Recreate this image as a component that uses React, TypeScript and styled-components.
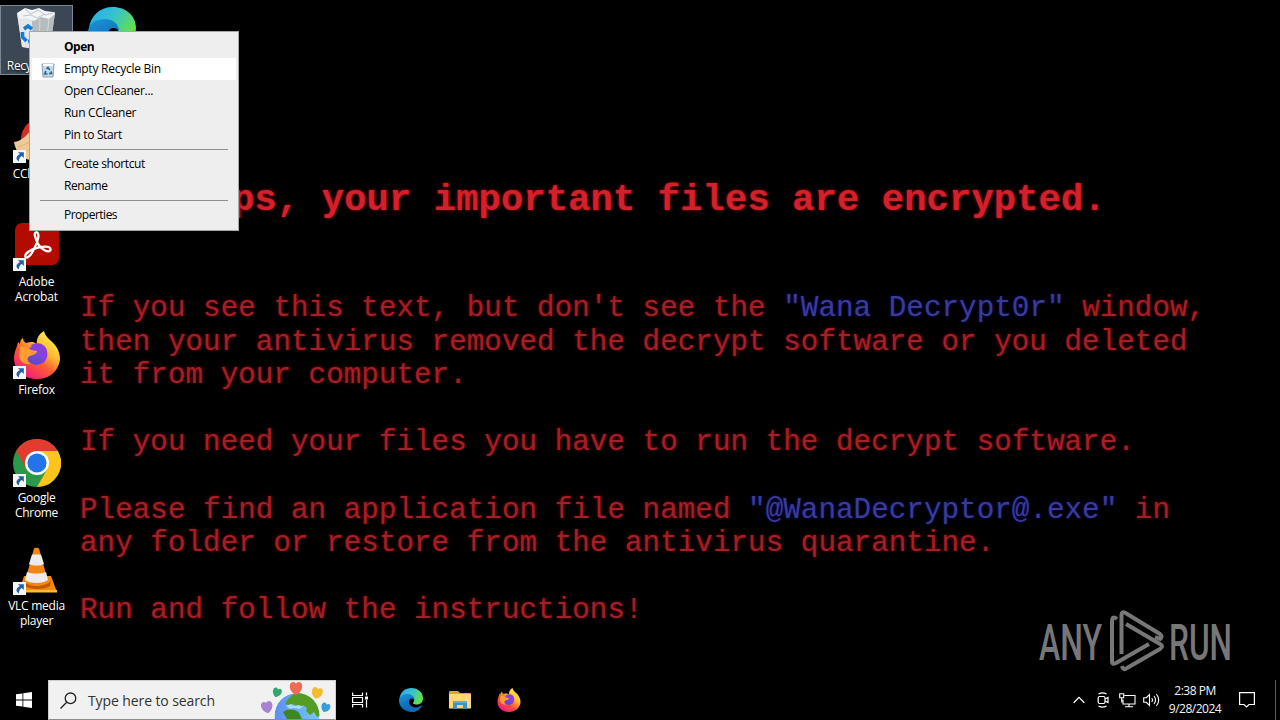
import React from "react";
import styled, { createGlobalStyle } from "styled-components";

const Global = createGlobalStyle`
  * { box-sizing: border-box; }
  body { margin: 0; background: #000; overflow: hidden; }
`;

const Screen = styled.div`
  position: relative;
  display: grid;
  grid-template-rows: 680px 40px;
  width: 1280px;
  height: 720px;
  overflow: hidden;
  background: #000;
  font-family: "Open Sans", "Noto Sans", sans-serif;
`;

const Desktop = styled.main`
  display: grid;
  grid-template: 680px / 1280px;
  overflow: hidden;
  > * { grid-area: 1 / 1; }
`;

/* wallpaper */
const Wallpaper = styled.section`
  padding: 177px 0 0 80px;
  font-family: "Liberation Mono", monospace;
  color: #a51f26;
  white-space: pre;
`;
const Headline = styled.h1`
  margin: 0 0 69px 85px;
  font-size: 37.33px;
  line-height: 46px;
  font-weight: 700;
  color: #d3202a;
  text-shadow: 0 0 3px #b00010;
`;
const Message = styled.div`
  margin: 0 0 33.6px;
  font-size: 29.3px;
  line-height: 33.6px;
  text-shadow: 0 0 3px #80000c;
`;
const Line = styled.div`
  display: flex;
  height: 33.6px;
`;
const Blue = styled.span`
  color: #3b3b98;
  text-shadow: 0 0 3px #10107c;
`;

/* desktop icons */
const IconColumn = styled.div`
  display: grid;
  grid-template-rows: repeat(6, 108px);
  align-content: start;
  width: 74px;
  padding-top: 5px;
`;
const Shortcut = styled.div<{ $selected?: boolean }>`
  display: flex;
  flex-direction: column;
  align-items: center;
  width: 73px;
  height: ${(p) => (p.$selected ? "70px" : "90px")};
  padding-top: 1px;
  border: 1px solid ${(p) => (p.$selected ? "#7b8894" : "transparent")};
  background: ${(p) => (p.$selected ? "#3b4754" : "transparent")};
`;
const Art = styled.div`
  position: relative;
  width: 48px;
  height: 48px;
  svg { display: block; }
`;
const Arrow = styled.svg`
  position: absolute;
  left: 0;
  bottom: 0;
`;
const Label = styled.span<{ $space?: number }>`
  margin-top: 3px;
  color: #fff;
  font-size: 12px;
  line-height: 15px;
  letter-spacing: ${(p) => p.$space ?? 0}px;
  text-align: center;
  white-space: pre;
  text-shadow: 0 1px 2px #000;
`;
const EdgeSlot = styled.div`
  width: 48px;
  height: 48px;
  margin: 7px 0 0 88px;
`;

/* context menu */
const Menu = styled.ul`
  position: absolute;
  left: 29px;
  top: 31px;
  width: 210px;
  height: 200px;
  margin: 0;
  padding: 4px 2px;
  list-style: none;
  background: #eeeeee;
  border: 1px solid #a6a6a6;
`;
const MenuItem = styled.li<{ $bold?: boolean; $hover?: boolean; $space?: number }>`
  display: grid;
  grid-template-columns: 32px 1fr;
  align-items: center;
  height: 22px;
  color: #000;
  font-size: 12px;
  line-height: 22px;
  font-weight: ${(p) => (p.$bold ? 700 : 400)};
  letter-spacing: ${(p) => p.$space ?? 0}px;
  background: ${(p) => (p.$hover ? "#fff" : "transparent")};
  white-space: nowrap;
`;
const MenuIcon = styled.span`
  display: flex;
  padding: 1px 0 0 8px;
`;
const Separator = styled.li`
  height: 7px;
  padding: 3px 8px;
  &::after { content: ""; display: block; height: 1px; background: #8f908c; }
`;

/* watermark */
const Watermark = styled.svg`
  position: absolute;
  left: 1030px;
  top: 605px;
`;

/* taskbar */
const Taskbar = styled.footer`
  display: flex;
  align-items: stretch;
  background: #000;
`;
const TaskButton = styled.div<{ $w: number }>`
  display: flex;
  align-items: center;
  justify-content: center;
  width: ${(p) => p.$w}px;
`;
const Search = styled.div`
  display: flex;
  align-items: center;
  width: 288px;
  height: 40px;
  padding-left: 11px;
  background: #f1f1f1;
  border: 1px solid #cfcfcf;
  border-bottom-color: #8c8c8c;
  color: #333;
  font-size: 14px;
`;
const SearchText = styled.span`
  width: 173px;
  margin-left: 11px;
  letter-spacing: -0.1px;
  white-space: nowrap;
`;
const Tray = styled.div`
  display: flex;
  align-items: center;
  margin-left: auto;
`;
const TrayIcon = styled.div`
  display: flex;
  justify-content: center;
  width: 24px;
`;
const Clock = styled.div`
  display: flex;
  flex-direction: column;
  width: 64px;
  color: #f4f4f4;
  font-size: 12px;
  line-height: 18px;
  text-align: center;
  letter-spacing: -0.5px;
  white-space: nowrap;
`;
const PeekEdge = styled.div`
  width: 5px;
  height: 40px;
  border-left: 1px solid #5a5a5a;
`;

const ShortcutArrow = () => (
  <Arrow width="13" height="13" viewBox="0 0 13 13">
    <rect width="13" height="13" fill="#f4f6f8" />
    <path d="M5 2.2h5.8V8L8.9 6.1C6.8 7 6 8.500 5.900 11.300 2.300 9.500 3 5.500 7 4.200Z" fill="#1f5fa8" />
  </Arrow>
);

const RecycleArt = () => (
  <svg width="48" height="48" viewBox="0 0 48 48">
    <path d="M4 6 42 5 37 42 9 40Z" fill="#c3c9cc" />
    <path d="M4 6 19 9 20 42 9 40Z" fill="#e2e6e8" />
    <path d="M19 9 42 6 37 42 20 42Z" fill="#b5bbbe" />
    <path d="M4 6 12 1l7 2 7-2 6 3 8 1 2 2-6 5-8-2-7 4-8-3-6 1Z" fill="#f2f4f5" />
    <path d="m12 2 6 5 7-4 7 5 8-2M10 9l8-1 6 3 8-4" stroke="#bcc3c7" fill="none" />
    <path d="m27 12-1 28M36 11l-3 29" stroke="#d4d8da" fill="none" />
    <path d="M11 22l4-3 4 3M9.500 25l0 5 4 4M15 34.500l5-1 .5-5" stroke="#187bd0" strokeWidth="3.600" fill="none" />
  </svg>
);

const EdgeArt = ({ size, id }: { size: number; id: string }) => (
  <svg width={size} height={size} viewBox="0 0 48 48">
    <defs>
      <linearGradient id={id + "a"} x1="0" y1="0" x2="1" y2=".5">
        <stop offset="0" stopColor="#24a9e8" />
        <stop offset=".5" stopColor="#35c1d2" />
        <stop offset="1" stopColor="#62e04c" />
      </linearGradient>
      <linearGradient id={id + "b"} x1="0" y1="0" x2=".5" y2="1">
        <stop offset="0" stopColor="#1996dc" />
        <stop offset="1" stopColor="#0c58a5" />
      </linearGradient>
    </defs>
    <path d="M1 21C3 8 12 0 25 0c13 0 23 9 23 21 0 8-6 12-13 12-5 0-9-2-6-5 3-5 0-12-9-13C11 14 4 17 1 21Z" fill={`url(#${id}a)`} />
    <path d="M0 25c0-8 8-13 17-13 8 0 14 5 14 12-3-5-11-4-11 3 0 8 8 15 17 12 3-1 6-3 8-4 1 0 1 1 0 2-5 7-12 11-20 11C11 48 0 38 0 25Z" fill={`url(#${id}b)`} />
    <path d="M15 24c-5 9 0 21 12 24 8-1 14-5 18-11 1-1 0-2-1-1-12 7-24 1-25-8Z" fill="#126db7" />
  </svg>
);

const CCleanerArt = () => (
  <svg width="48" height="48" viewBox="0 0 48 48">
    <circle cx="29" cy="24" r="21" fill="#cf2d2a" />
    <circle cx="33" cy="25" r="17" fill="#73787c" />
    <path d="M1 27c8-1 13-7 17-12l12 17-12 13C9 44 3 38 1 27Z" fill="#f0ca96" />
    <path d="m5 32 13-5M9 38l12-6" stroke="#dcb27c" />
  </svg>
);

const AcrobatArt = () => (
  <svg width="48" height="48" viewBox="0 0 48 48">
    <rect x="2" y="0" width="44" height="42" rx="7" fill="#b30b00" />
    <path d="M12.500 34c1.500 2 5.500-1.500 8.500-8 3-6 5-11.500 4.300-14.500-.8-3.500-4.300-3-3.300 1.500 1.300 6 5 12 10 14.500 3.500 1.700 6 .5 5.500-1.500-.8-3-7-2.500-12.500-1.300-6.500 1.300-14 5.800-12.500 9.300Z" fill="none" stroke="#fff" strokeWidth="2.300" strokeLinejoin="round" />
  </svg>
);

const FirefoxArt = ({ size, id }: { size: number; id: string }) => (
  <svg width={size} height={size} viewBox="0 0 48 48">
    <defs>
      <linearGradient id={id + "a"} x1=".85" y1=".1" x2=".25" y2=".95">
        <stop offset="0" stopColor="#fff14a" />
        <stop offset=".35" stopColor="#ffb82d" />
        <stop offset=".62" stopColor="#ff5a36" />
        <stop offset="1" stopColor="#f21c78" />
      </linearGradient>
      <linearGradient id={id + "b"} x1=".7" y1="0" x2=".3" y2="1">
        <stop offset="0" stopColor="#a144eb" />
        <stop offset="1" stopColor="#5549c9" />
      </linearGradient>
    </defs>
    <path d="M7 13c0-3 1-5 3-6 0 2 1 4 3 5 2-1 5-1 7-1l4 2c-1-5 2-10 7-13 1 6 7 9 11 14 4 5 5 10 5 15-2 12-11 19-23 19C10 48 1 39 1 27c0-5 2-9 3-12l1-4Z" fill={`url(#${id}a)`} />
    <circle cx="23.500" cy="24" r="10" fill={`url(#${id}b)`} />
    <path d="M18 14c6-3 12-2 15 3 3 6 1 13-4 16 3-7-1-14-9-14Z" fill="#8b3fe0" />
    <path d="M7 16c4-1 8 0 11 3l6 1c0 3-4 4-7 5-4 2-3 6 1 8-6 1-11-2-12-8Z" fill="#ff9d2e" />
  </svg>
);

const ChromeArt = () => (
  <svg width="48" height="48" viewBox="0 0 48 48">
    <circle cx="24" cy="24" r="24" fill="#2b9a48" />
    <path d="M3.200 12A24 24 0 0 1 44.800 12H24L13.600 30Z" fill="#e33b2e" />
    <path d="M44.800 12A24 24 0 0 1 24 48L34.400 30 24 12Z" fill="#fdc41a" />
    <circle cx="24" cy="24" r="12" fill="#fff" />
    <circle cx="24" cy="24" r="9.600" fill="#2374e8" />
  </svg>
);

const VlcArt = () => (
  <svg width="48" height="48" viewBox="0 0 48 48">
    <path d="M11 29h27l6 16H6Z" fill="#f58a0b" />
    <path d="M6 43h38v2.500H6Z" fill="#ffbd35" />
    <path d="M11 33c0 7 26 7 27 0l-1 6c-5 4-20 4-25 0Z" fill="#c65604" />
    <path d="M21 1.500c1-1 4-1 5 0l9 33c-4 6-19 6-23 0Z" fill="#f28614" />
    <path d="m19 7.500 9 0 3 9.500c-4 2-11 2-15 0ZM14 25c5 2 14 2 19 0l2 8c-5 4-18 4-23 0Z" fill="#ececec" />
  </svg>
);

const Globe = () => (
  <svg width="74" height="38" viewBox="0 0 74 38">
    <defs>
      <clipPath id="globe"><circle cx="36" cy="34.500" r="22.500" /></clipPath>
      <linearGradient id="sea"><stop stopColor="#5c8ff0" /><stop offset="1" stopColor="#75c7f5" /></linearGradient>
    </defs>
    <g clipPath="url(#globe)">
      <circle cx="36" cy="34.500" r="22.500" fill="url(#sea)" />
      <path d="m26 19 8-7 12 0 9 8 5 14-4 2-3-5-4 3-4-4 1-3-4-3-5 3-4-4-4 1-5-1Z" fill="#559c23" />
      <path d="M22 31c5-4 13-3 16 1l3 6H26Z" fill="#3e8622" />
      <path d="m25 25 5-2 3 2 5-1 4 2-4 2-5-1-4 1Z" fill="#a6dcf5" />
    </g>
    {[
      [35, 7, 1.25, "#ee6b55", 0],
      [16, 11.500, 0.9, "#2eaa68", 18],
      [56, 12, 1.100, "#f4bd31", 14],
      [6, 26, 1.150, "#a982d3", -12],
      [64.500, 26.500, 0.9, "#359edb", 22],
    ].map(([x, y, s, fill, r]) => (
      <path key={String(fill)} transform={`translate(${x} ${y}) rotate(${r}) scale(${s})`} d="M0 5.500C-3 4-5 1.500-5-1.500c0-3.500 3.500-4.500 5-2C1.500-6 5-5 5-1.500 5 1.500 3 4 0 5.500Z" fill={String(fill)} />
    ))}
  </svg>
);

const shortcuts = [
  { text: "CCleaner", art: <CCleanerArt />, space: -0.4 },
  { text: "Adobe\nAcrobat", art: <AcrobatArt />, space: -0.1 },
  { text: "Firefox", art: <FirefoxArt size={48} id="ffd" />, space: -0.25 },
  { text: "Google\nChrome", art: <ChromeArt />, space: -0.3 },
  { text: "VLC media\nplayer", art: <VlcArt />, space: -0.25 },
];

export default function App() {
  return (
    <Screen>
      <Global />
      <Desktop>
        <Wallpaper>
          <Headline>Ooops, your important files are encrypted.</Headline>
          <Message>
            <Line>
              <span>{"If you see this text, but don't see the "}</span>
              <Blue>"Wana Decrypt0r"</Blue>
              <span>{" window,"}</span>
            </Line>
            <Line>then your antivirus removed the decrypt software or you deleted</Line>
            <Line>it from your computer.</Line>
          </Message>
          <Message>
            <Line>If you need your files you have to run the decrypt software.</Line>
          </Message>
          <Message>
            <Line>
              <span>{"Please find an application file named "}</span>
              <Blue>"@WanaDecryptor@.exe"</Blue>
              <span>{" in"}</span>
            </Line>
            <Line>any folder or restore from the antivirus quarantine.</Line>
          </Message>
          <Message>
            <Line>Run and follow the instructions!</Line>
          </Message>
        </Wallpaper>
        <EdgeSlot><EdgeArt size={48} id="edged" /></EdgeSlot>
        <IconColumn>
          <Shortcut $selected>
            <Art><RecycleArt /></Art>
            <Label $space={-0.3}>Recycle Bin</Label>
          </Shortcut>
          {shortcuts.map((s) => (
            <Shortcut key={s.text}>
              <Art>{s.art}<ShortcutArrow /></Art>
              <Label $space={s.space}>{s.text}</Label>
            </Shortcut>
          ))}
        </IconColumn>
      </Desktop>

      <Watermark width="240" height="72" viewBox="0 0 240 72" fill="#777" fontFamily="Roboto, sans-serif" fontSize="50.500" fontWeight="500">
        <text x="9" y="54.500" textLength="63" lengthAdjust="spacingAndGlyphs">ANY</text>
        <text x="139" y="54.500" textLength="63" lengthAdjust="spacingAndGlyphs">RUN</text>
        <g fill="none" stroke="#777" strokeWidth="4" strokeLinejoin="round">
          <path d="M87 14q-5-4-5 3V57q0 3 4 1L119 39" />
          <path d="M91.500 49V10q0-4 4-2L130 29q3 3 0 5L125 32" />
          <path d="M96 19 130 39q4 2 0 5L97 63q-4 3-5-2" />
        </g>
      </Watermark>

      <Menu>
        <MenuItem $bold $space={-0.5}><MenuIcon />Open</MenuItem>
        <MenuItem $hover $space={-0.25}>
          <MenuIcon>
            <svg width="16" height="16" viewBox="0 0 16 16">
              <path d="M2 2h12l-1 13H3Z" fill="#c5d8e5" stroke="#8ba0af" />
              <path d="M3 3h10" stroke="#f4fafd" strokeWidth="2" />
              <path d="m6.500 7 1.500-1.500L9.800 8M11 9.500l.5 2H9M7.500 12H4.800l1-3" stroke="#276995" strokeWidth="1.700" fill="none" />
            </svg>
          </MenuIcon>
          Empty Recycle Bin
        </MenuItem>
        <MenuItem $space={-0.3}><MenuIcon />Open CCleaner...</MenuItem>
        <MenuItem $space={-0.3}><MenuIcon />Run CCleaner</MenuItem>
        <MenuItem $space={-0.35}><MenuIcon />Pin to Start</MenuItem>
        <Separator />
        <MenuItem $space={-0.4}><MenuIcon />Create shortcut</MenuItem>
        <MenuItem $space={-0.4}><MenuIcon />Rename</MenuItem>
        <Separator />
        <MenuItem $space={-0.5}><MenuIcon />Properties</MenuItem>
      </Menu>

      <Taskbar>
        <TaskButton $w={48}>
          <svg width="16" height="16" viewBox="0 0 16 16" fill="#fff">
            <path d="M0 2.300 6.500 1.400V7.600H0ZM7.300 1.300 16 0V7.600H7.300ZM0 8.400H6.500V14.600L0 13.700ZM7.300 8.400H16V16L7.300 14.700Z" />
          </svg>
        </TaskButton>
        <Search>
          <svg width="17" height="17" viewBox="0 0 17 17" fill="none" stroke="#222" strokeWidth="1.300">
            <circle cx="10.500" cy="6.300" r="5.300" /><path d="M6.700 10.200.5 16.500" />
          </svg>
          <SearchText>Type here to search</SearchText>
          <Globe />
        </Search>
        <TaskButton $w={48}>
          <svg width="16" height="16" viewBox="0 0 16 16" fill="none" stroke="#fff" strokeWidth="1.200">
            <path d="M.6.5V3.500H10.500V.5M.6 15.500V12.500H10.500V15.500M.6 5.500H10.500V10.500H.6ZM14.500.5V3.500M14.500 8V15.500" />
            <path d="M13 4.500h3v3h-3z" fill="#fff" stroke="none" />
          </svg>
        </TaskButton>
        <TaskButton $w={54}><EdgeArt size={24} id="edget" /></TaskButton>
        <TaskButton $w={44}>
          <svg width="22" height="20" viewBox="0 0 22 20">
            <path d="M0 2q0-1 1-1h8l2 2h10q1 0 1 1v14H0Z" fill="#e5a522" />
            <path d="M0 4h22v14.500H0Z" fill="#ffd978" />
            <path d="M4 19v-7q0-1 1-1h12q1 0 1 1v7h-4v-4H8v4Z" fill="#3d94c9" />
            <path d="M4 12h14" stroke="#65b6df" strokeWidth="1.500" />
          </svg>
        </TaskButton>
        <TaskButton $w={54}><FirefoxArt size={24} id="fft" /></TaskButton>

        <Tray>
          <TrayIcon>
            <svg width="12" height="8" viewBox="0 0 12 8" fill="none" stroke="#fff" strokeWidth="1.300"><path d="m.7 6.700 5.300-5.300 5.300 5.300" /></svg>
          </TrayIcon>
          <TrayIcon>
            <svg width="12" height="16" viewBox="0 0 12 16" fill="none" stroke="#fff" strokeWidth="1.200">
              <rect x="1.200" y="4.500" width="6.800" height="7" rx="1.500" /><path d="m8 7 3-1.500v5L8 9M1.500 2Q5.500-.3 9.500 2M1.500 14q4 2.300 8 0" />
            </svg>
          </TrayIcon>
          <TrayIcon>
            <svg width="17" height="15" viewBox="0 0 17 15" fill="none" stroke="#fff" strokeWidth="1.100">
              <path d="M5.500 2.500H16V11H4V6.500M10 11v2.500M6 13.700h8M.7.700h4v4h-4zM2.700 5v4.500" />
            </svg>
          </TrayIcon>
          <TrayIcon>
            <svg width="17" height="14" viewBox="0 0 17 14" fill="none" stroke="#fff" strokeWidth="1.100">
              <path d="M.7 4.700h2.600L6.500 1.500v11L3.300 9.300H.7ZM8.700 5q1.600 2 0 4M11 3q3 4 0 8M13.400 1q4.600 6 0 12" />
            </svg>
          </TrayIcon>
          <Clock><span>2:38 PM</span><span>9/28/2024</span></Clock>
          <TaskButton $w={40}>
            <svg width="16" height="16" viewBox="0 0 16 16" fill="none" stroke="#fff" strokeWidth="1.200"><path d="M.6.700H15.400V12.500H10L7.500 15 5 12.500H.6Z" /></svg>
          </TaskButton>
          <TaskButton $w={8} />
          <PeekEdge />
        </Tray>
      </Taskbar>
    </Screen>
  );
}
